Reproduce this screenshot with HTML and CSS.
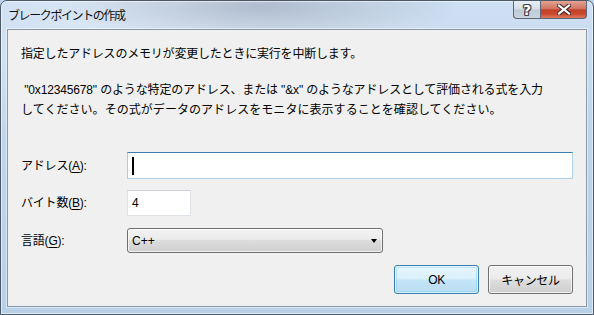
FILE: index.html
```html
<!DOCTYPE html>
<html lang="ja">
  <head>
    <meta charset="UTF-8" />
    <title>ブレークポイントの作成</title>
    <link rel="stylesheet" href="styles.css">
  </head>
  <body>
    <div class="window">
      <div class="titlebar">
        <span class="title">ブレークポイントの作成</span>
        <div class="caption-buttons">
          <span class="cap-help">?</span>
          <span class="cap-close">
            <svg width="14" height="11" viewBox="0 0 14 11">
              <path d="M2 1.5 L12 9.5 M12 1.5 L2 9.5" stroke="#3a2a2a" stroke-width="4.2" stroke-linecap="square" fill="none" />
              <path d="M2 1.5 L12 9.5 M12 1.5 L2 9.5" stroke="#ffffff" stroke-width="2.2" stroke-linecap="square" fill="none" />
            </svg>
          </span>
        </div>
      </div>
      <div class="client">
        <p class="msg">指定したアドレスのメモリが変更したときに実行を中断します。</p>
        <p class="msg msg-detail"><span class="msg-tight">&nbsp;"0x12345678" のような特定のアドレス、または "&amp;x" のようなアドレスとして評価される式を入力</span><br>してください。その式がデータのアドレスをモニタに表示することを確認してください。</p>
        <div class="form">
          <div class="row row-address">
            <label class="label">アドレス(<u>A</u>):</label>
            <div class="textbox textbox-focus"><span class="caret"></span></div>
          </div>
          <div class="row row-size">
            <label class="label">バイト数(<u>B</u>):</label>
            <div class="textbox textbox-small">4</div>
          </div>
          <div class="row row-lang">
            <label class="label">言語(<u>G</u>):</label>
            <div class="combo">
              <span class="combo-value">C++</span>
              <span class="combo-arrow"></span>
            </div>
          </div>
        </div>
        <div class="actions">
          <button class="button button-default">OK</button>
          <button class="button">キャンセル</button>
        </div>
      </div>
    </div>
  </body>
</html>
```

FILE: styles.css
```css
* {
  margin: 0;
  padding: 0;
  box-sizing: border-box;
}
html,
body {
  width: 594px;
  height: 315px;
  overflow: hidden;
}
body {
  font-family: "Liberation Sans", "Noto Sans CJK JP", sans-serif;
  font-size: 12px;
  color: #000;
  background: #bcd2ea;
}
.window {
  display: flex;
  flex-direction: column;
  width: 594px;
  height: 315px;
  padding: 0 6px 7px 6px;
  border: 1px solid #4d5866;
  border-radius: 7px 7px 0 0;
  background:
    radial-gradient(ellipse 200px 40px at 260px 6px, rgba(120, 135, 155, 0.45), transparent),
    radial-gradient(ellipse 260px 120px at 200px 60px, rgba(255, 255, 255, 0.55), transparent),
    linear-gradient(180deg, #cfe0f3 0%, #bfd5ec 40%, #b9d0e9 100%);
  box-shadow: inset 0 0 0 1px rgba(255, 255, 255, 0.55);
}
.titlebar {
  display: flex;
  justify-content: space-between;
  height: 28px;
}
.title {
  align-self: center;
  padding-left: 1px;
  margin-top: 1px;
  font-size: 12px;
  letter-spacing: -1.4px;
  line-height: 16px;
  color: #111;
}
.caption-buttons {
  display: flex;
  align-self: flex-start;
}
.caption-buttons span {
  display: flex;
  align-items: center;
  justify-content: center;
  height: 18px;
  border: 1px solid #5c6674;
  border-top: none;
}
.cap-help {
  width: 27px;
  border-radius: 0 0 0 4px;
  border-right: none !important;
  background: linear-gradient(180deg, #e7edf4 0%, #d5dee8 48%, #bfcad7 52%, #c9d4e0 100%);
  font-family: "DejaVu Sans", sans-serif;
  font-weight: bold;
  font-size: 14px;
  line-height: 14px;
  color: #fff;
  text-shadow: 1px 0 0 #3c4450, -1px 0 0 #3c4450, 0 1px 0 #3c4450, 0 -1px 0 #3c4450, 1px 1px 0 #3c4450, -1px -1px 0 #3c4450, 1px -1px 0 #3c4450, -1px 1px 0 #3c4450;
}
.cap-close {
  width: 47px;
  border-radius: 0 0 4px 0;
  background: linear-gradient(180deg, #e4a495 0%, #d27461 45%, #c3412a 52%, #c9472d 75%, #de7a5e 100%);
}
.client {
  flex: 1;
  padding: 14px 13px 12px 13px;
  border: 1px solid #8896a6;
  background: #f0f0f0;
  box-shadow: 0 0 0 1px rgba(255, 255, 255, 0.5);
}
.msg {
  line-height: 20px;
  letter-spacing: -0.2px;
  white-space: nowrap;
}
.msg-detail {
  margin-top: 16px;
  letter-spacing: 0.05px;
}
.msg-tight {
  letter-spacing: -0.15px;
}
.form {
  margin-top: 32px;
}
.row {
  display: flex;
  align-items: center;
}
.row-size {
  margin-top: 11px;
}
.row-lang {
  margin-top: 12px;
}
.label {
  width: 106px;
  letter-spacing: -0.2px;
  line-height: 16px;
}
.label u {
  text-underline-offset: 2px;
}
.textbox {
  display: flex;
  align-items: center;
  padding-left: 4px;
  background: #fff;
  border: 1px solid #dfe2e8;
  border-top-color: #cdd1d8;
  font-size: 12px;
}
.textbox-focus {
  flex: 1;
  height: 27px;
  border-color: #b2d2ea;
  border-top-color: #3d7cb0;
  border-left-color: #a9cbe6;
}
.caret {
  width: 2px;
  height: 18px;
  background: #000;
}
.textbox-small {
  width: 64px;
  height: 26px;
}
.combo {
  display: flex;
  align-items: center;
  justify-content: space-between;
  width: 256px;
  height: 25px;
  padding: 0 5px 0 4px;
  border: 1px solid #707070;
  border-radius: 3px;
  background: linear-gradient(180deg, #f3f3f3 0%, #ebebeb 45%, #dddddd 50%, #cfcfcf 100%);
  box-shadow: inset 0 0 0 1px rgba(255, 255, 255, 0.7);
}
.combo-arrow {
  width: 0;
  height: 0;
  border-left: 3.5px solid transparent;
  border-right: 3.5px solid transparent;
  border-top: 4px solid #000;
  margin-top: 1px;
}
.actions {
  display: flex;
  justify-content: flex-end;
  gap: 9px;
  margin-top: 12px;
}
.button {
  width: 85px;
  height: 29px;
  font-family: inherit;
  font-size: 12px;
  color: #000;
  border: 1px solid #707070;
  border-radius: 3px;
  background: linear-gradient(180deg, #f2f2f2 0%, #ebebeb 48%, #dddddd 52%, #cfcfcf 100%);
  box-shadow: inset 0 0 0 1px rgba(255, 255, 255, 0.75);
  letter-spacing: -0.3px;
}
.button-default {
  border-color: #3c7fb1;
  background: linear-gradient(180deg, #eaf6fd 0%, #d9f0fc 48%, #c4e5f8 52%, #b8dcf2 100%);
  box-shadow: inset 0 0 0 1px rgba(255, 255, 255, 0.6), inset 0 0 0 2px rgba(110, 200, 240, 0.35);
}
```
